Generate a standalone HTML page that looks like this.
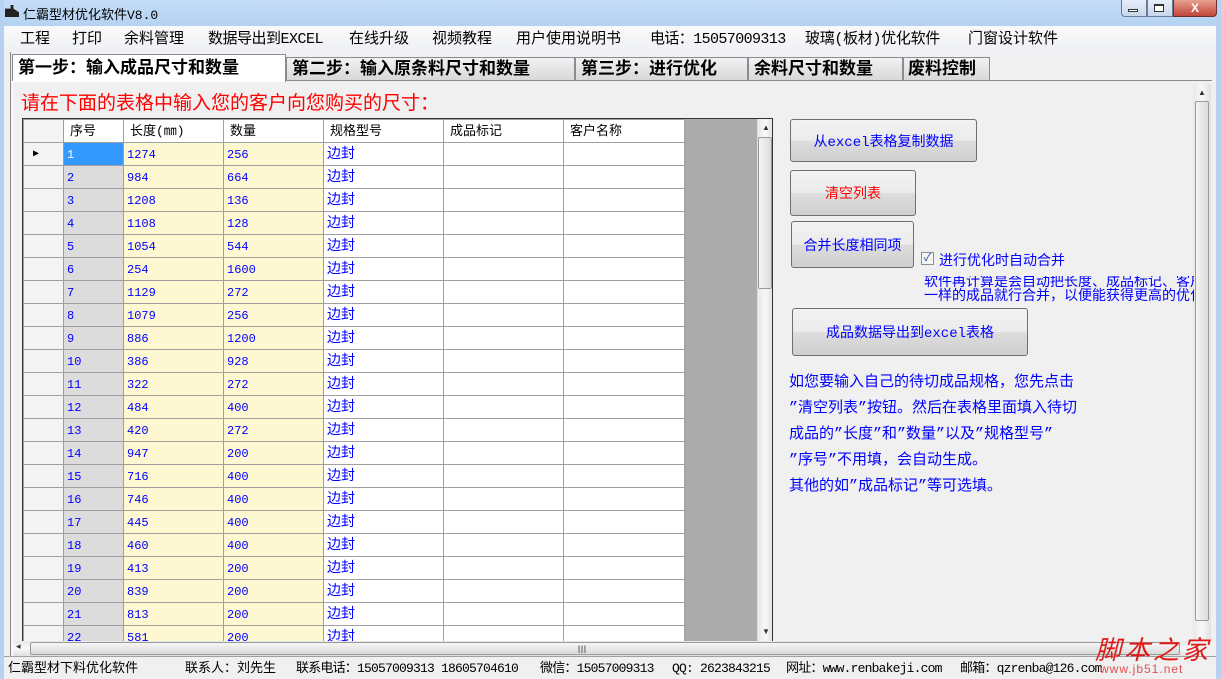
<!DOCTYPE html>
<html><head><meta charset="utf-8"><style>
*{margin:0;padding:0;box-sizing:border-box}
body{width:1221px;height:679px;overflow:hidden;background:#f0f0f0;font-family:"Liberation Sans","Noto Sans CJK SC","WenQuanYi Zen Hei",sans-serif;position:relative}
.a{position:absolute;white-space:nowrap}
.cjk{font-family:"Liberation Mono","WenQuanYi Zen Hei","Noto Sans CJK SC",monospace}
.btn{position:absolute;border:1px solid #707070;border-radius:3px;background:linear-gradient(#f2f2f2 0%,#ebebeb 50%,#dddddd 51%,#cfcfcf 100%);display:flex;align-items:center;justify-content:center;font-size:14px;color:#0000ff}
table{border-collapse:collapse;table-layout:fixed}
td{border:1px solid #a0a0a0;height:23px;font-size:12px;color:#0000ff;padding-left:3px;white-space:nowrap;overflow:hidden;font-family:"Liberation Mono","WenQuanYi Zen Hei",monospace;line-height:20px;padding-top:1px}
.sb{background:linear-gradient(90deg,#e8e8e8,#f8f8f8,#e0e0e0)}
.m{position:absolute;top:30px;font-size:15px;color:#000;line-height:20px}
.tab{position:absolute;top:57px;height:24px;background:linear-gradient(#f2f2f2,#d8d8d8);border:1px solid #898c95;font-size:17px;font-weight:bold;padding-left:5px;padding-top:2px;line-height:22px;overflow:hidden}
.st{position:absolute;top:661px;font-size:13px;color:#000;line-height:16px;white-space:nowrap}
</style></head><body>
<div class="a" style="left:0;top:0;width:1221px;height:26px;background:linear-gradient(#c4ddf7,#b5d2f2)"></div>
<div class="a" style="left:0;top:0;width:4px;height:679px;background:#b5d2f2"></div>
<div class="a" style="left:1216px;top:0;width:5px;height:679px;background:#b5d2f2"></div>
<div class="a" style="left:5px;top:5px;width:14px;height:12px;background:#222;clip-path:polygon(0 30%,40% 30%,40% 0,60% 0,60% 30%,100% 60%,100% 100%,0 100%)"></div>
<div class="a cjk" style="left:23px;top:4px;font-size:13px;color:#000">仁霸型材优化软件V8.0</div>
<div class="a" style="left:1121px;top:0;width:26px;height:17px;border:1px solid #6a7d98;border-top:none;border-radius:0 0 0 4px;background:linear-gradient(#e6eef8,#c8d6ea)"></div>
<div class="a" style="left:1128px;top:9px;width:10px;height:3px;border:1px solid #333;background:#fff"></div>
<div class="a" style="left:1147px;top:0;width:26px;height:17px;border:1px solid #6a7d98;border-top:none;background:linear-gradient(#e6eef8,#c8d6ea)"></div>
<div class="a" style="left:1154px;top:4px;width:10px;height:8px;border:1px solid #333;border-top-width:2px;background:#fff"></div>
<div class="a" style="left:1173px;top:0;width:44px;height:17px;border:1px solid #6a3030;border-top:none;border-radius:0 0 4px 0;background:linear-gradient(#e8a090,#c0463a);color:#fff;font-size:12px;font-weight:bold;text-align:center;line-height:16px">X</div>
<div class="a" style="left:4px;top:26px;width:1212px;height:26px;background:linear-gradient(#fafafa,#eef0f4)"></div>
<div class="m cjk" style="left:20px">工程</div>
<div class="m cjk" style="left:72px">打印</div>
<div class="m cjk" style="left:124px">余料管理</div>
<div class="m cjk" style="left:208px;letter-spacing:-0.5px">数据导出到EXCEL</div>
<div class="m cjk" style="left:349px">在线升级</div>
<div class="m cjk" style="left:432px">视频教程</div>
<div class="m cjk" style="left:516px">用户使用说明书</div>
<div class="m cjk" style="left:650px;letter-spacing:-0.6px">电话：15057009313</div>
<div class="m cjk" style="left:805px;letter-spacing:-0.3px">玻璃(板材)优化软件</div>
<div class="m cjk" style="left:968px">门窗设计软件</div>
<div class="a" style="left:10px;top:52px;width:1px;height:604px;background:#8a8a8a"></div>
<div class="a" style="left:12px;top:80px;width:1200px;height:1px;background:#898c95"></div>
<div class="a cjk" style="left:12px;top:54px;width:274px;height:28px;background:#fff;border:1px solid #898c95;border-bottom:none;font-size:17px;font-weight:bold;padding-left:5px;padding-top:2px;line-height:26px">第一步：输入成品尺寸和数量</div>
<div class="tab cjk" style="left:286px;width:289px">第二步：输入原条料尺寸和数量</div>
<div class="tab cjk" style="left:575px;width:173px">第三步：进行优化</div>
<div class="tab cjk" style="left:748px;width:155px">余料尺寸和数量</div>
<div class="tab cjk" style="left:903px;width:87px;padding-left:4px">废料控制</div>
<div class="a" style="left:12px;top:81px;width:1px;height:575px;background:#fff"></div>
<div class="a cjk" style="left:21px;top:92px;font-size:19px;color:#ff0000;line-height:24px">请在下面的表格中输入您的客户向您购买的尺寸：</div>
<div class="a" style="left:22px;top:118px;width:751px;height:524px;border:1px solid #333;background:#ababab;overflow:hidden">
<table style="position:absolute;left:0;top:0;width:661px">
<colgroup><col style="width:40px"><col style="width:60px"><col style="width:100px"><col style="width:100px"><col style="width:120px"><col style="width:120px"><col style="width:121px"></colgroup>
<tr style="background:#fff"><td style="height:21px;background:#f4f4f4"></td><td style="color:#000;font-size:13px;padding-left:6px">序号</td><td style="color:#000;font-size:13px;padding-left:6px">长度(㎜)</td><td style="color:#000;font-size:13px;padding-left:6px">数量</td><td style="color:#000;font-size:13px;padding-left:6px">规格型号</td><td style="color:#000;font-size:13px;padding-left:6px">成品标记</td><td style="color:#000;font-size:13px;padding-left:6px">客户名称</td></tr>
<tbody id="tb"></tbody>
</table>
<div class="a sb" style="left:734px;top:0;width:16px;height:522px;border-left:1px solid #ddd"></div>
<div class="a" style="left:735px;top:18px;width:14px;height:152px;border:1px solid #999;border-radius:2px;background:linear-gradient(90deg,#f4f4f4,#dcdcdc)"></div>
<div class="a" style="left:739px;top:4px;font-size:8px;color:#333">▲</div>
<div class="a" style="left:739px;top:508px;font-size:8px;color:#333">▼</div>
</div>
<div class="a" style="left:13px;top:641px;width:1180px;height:15px;background:linear-gradient(#e8e8e8,#f8f8f8,#e0e0e0)"></div>
<div class="a" style="left:30px;top:642px;width:1150px;height:13px;border:1px solid #999;border-radius:2px;background:linear-gradient(#f6f6f6,#dadada)"></div>
<div class="a" style="left:16px;top:641px;font-size:9px;color:#333">◂</div>
<div class="a" style="left:577px;top:641px;font-size:10px;color:#555">Ⅲ</div>
<div class="a sb" style="left:1193px;top:84px;width:18px;height:557px"></div>
<div class="a" style="left:1195px;top:101px;width:14px;height:520px;border:1px solid #999;border-radius:2px;background:linear-gradient(90deg,#f4f4f4,#dcdcdc)"></div>
<div class="a" style="left:1198px;top:88px;font-size:8px;color:#333">▲</div>
<div class="btn cjk" style="left:790px;top:119px;width:187px;height:43px">从excel表格复制数据</div>
<div class="btn cjk" style="left:790px;top:170px;width:126px;height:46px;color:#ff0000">清空列表</div>
<div class="btn cjk" style="left:791px;top:221px;width:123px;height:47px">合并长度相同项</div>
<div class="a" style="left:921px;top:252px;width:13px;height:13px;border:1px solid #8e8f8f;background:#f4f4f4;font-size:11px;color:#2b4a8c;text-align:center;line-height:11px">✓</div>
<div class="a cjk" style="left:939px;top:250px;font-size:14px;color:#0000ff">进行优化时自动合并</div>
<div class="a cjk" style="left:924px;top:276px;width:270px;overflow:hidden;white-space:nowrap;font-size:14px;line-height:14px;color:#0000ff">软件再计算是会自动把长度、成品标记、客户名称<br>一样的成品就行合并，以便能获得更高的优化率</div>
<div class="btn cjk" style="left:792px;top:308px;width:236px;height:48px">成品数据导出到excel表格</div>
<div class="a cjk" style="left:789px;top:370px;font-size:15px;line-height:26px;color:#0000ff">如您要输入自己的待切成品规格，您先点击<br>”清空列表”按钮。然后在表格里面填入待切<br>成品的”长度”和”数量”以及”规格型号”<br>”序号”不用填，会自动生成。<br>其他的如”成品标记”等可选填。</div>
<div class="a" style="left:4px;top:656px;width:1212px;height:1px;background:#a0a0a0"></div>
<div class="st cjk" style="left:8px">仁霸型材下料优化软件</div>
<div class="st cjk" style="left:185px">联系人：刘先生</div>
<div class="st cjk" style="left:296px;letter-spacing:-0.8px">联系电话：15057009313 18605704610</div>
<div class="st cjk" style="left:540px;letter-spacing:-0.8px">微信：15057009313</div>
<div class="st cjk" style="left:672px;letter-spacing:-0.8px">QQ: 2623843215</div>
<div class="st cjk" style="left:786px;letter-spacing:-0.8px">网址：www.renbakeji.com</div>
<div class="st cjk" style="left:960px;letter-spacing:-0.8px">邮箱：qzrenba@126.com</div>
<div class="a" style="left:1095px;top:630px;font-size:26px;color:#e01818;font-style:italic;letter-spacing:3px;font-family:'WenQuanYi Zen Hei',sans-serif">脚本之家</div>
<div class="a" style="left:1100px;top:662px;font-size:12px;color:#e05050;letter-spacing:1px">www.jb51.net</div>
<script>
var d=[[1274,256],[984,664],[1208,136],[1108,128],[1054,544],[254,1600],[1129,272],[1079,256],[886,1200],[386,928],[322,272],[484,400],[420,272],[947,200],[716,400],[746,400],[445,400],[460,400],[413,200],[839,200],[813,200],[581,200]];
var h='';d.forEach(function(r,i){var sel=i==0;h+='<tr><td style="background:#f4f4f4;color:#000;font-size:10px">'+(sel?'&nbsp;▶':'')+'</td><td style="background:'+(sel?'#3399ff;color:#fff':'#dcdcdc')+'">'+(i+1)+'</td><td style="background:#fdf8d2">'+r[0]+'</td><td style="background:#fdf8d2">'+r[1]+'</td><td style="background:#fff;font-size:14px">边封</td><td style="background:#fff"></td><td style="background:#fff"></td></tr>';});
document.getElementById('tb').innerHTML=h;
</script>
</body></html>
